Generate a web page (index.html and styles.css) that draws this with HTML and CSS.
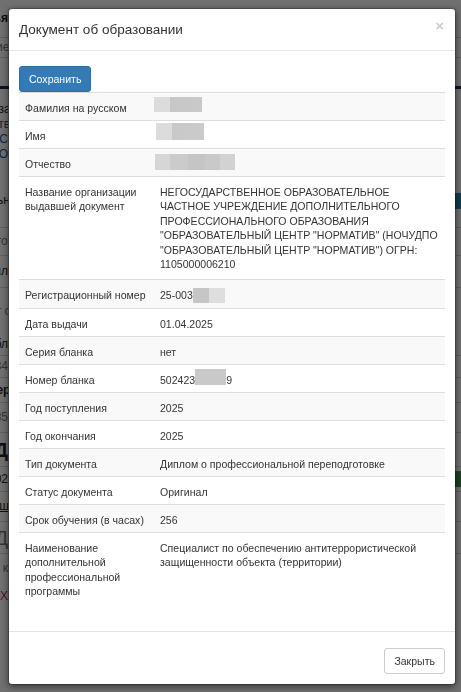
FILE: index.html
```html
<!DOCTYPE html>
<html lang="ru">
<head>
<meta charset="utf-8">
<title>Документ об образовании</title>
<link rel="stylesheet" href="styles.css">
</head>
<body>
<div class="page">
  <div class="pg-row pg-r1"><span class="frag frag-bold">Статья</span></div>
  <div class="pg-row pg-r2"><span class="frag frag-gray">Отделение</span></div>
  <div class="pg-row pg-r3"></div>
  <div class="pg-row pg-r4">
    <span class="frag">Учебное заведение</span>
    <span class="frag frag-blue">Государственное уд</span>
    <span class="frag frag-blue">ОСС</span>
    <span class="frag frag-blue">ЦЕНТРО</span>
  </div>
  <div class="pg-row pg-r5"><span class="frag">Специальностя</span><span class="tag tag-teal"></span></div>
  <div class="pg-row pg-r6"><span class="frag frag-gray">Документов</span></div>
  <div class="pg-row pg-r7"><span class="frag">Файл</span></div>
  <div class="pg-row pg-r8"><span class="frag frag-gray">Документ ок</span></div>
  <div class="pg-row pg-r9"><span class="frag">Бланк бл</span></div>
  <div class="pg-row pg-r10"><span class="frag frag-gray">Номер 34</span></div>
  <div class="pg-row pg-r11"><span class="frag frag-bold">Удостоверение ав</span></div>
  <div class="pg-row pg-r12"><span class="frag frag-gray">1235</span></div>
  <div class="pg-row pg-r13"><span class="frag frag-bold frag-big">Д</span></div>
  <div class="pg-row pg-r14"><span class="frag">202</span><span class="tag tag-green"></span></div>
  <div class="pg-row pg-r15"><span class="frag frag-under">Выписка ш</span></div>
  <div class="pg-row pg-r16"><span class="frag frag-big frag-gray">Д</span></div>
  <div class="pg-row pg-r17"><span class="frag frag-gray">Отдел к</span></div>
  <div class="pg-row pg-r18"><span class="frag frag-red">ЮХ</span></div>
  <div class="pg-toolbar">
    <span class="tb-btn"></span>
    <span class="tb-sep"></span>
    <span class="tb-gap"></span>
    <span class="tb-sep"></span>
  </div>
</div>

<div class="backdrop"></div>

<div class="modal" role="dialog">
  <div class="modal-content">
    <div class="modal-header">
      <h4 class="modal-title">Документ об образовании</h4>
      <button class="close" type="button" aria-label="Close">×</button>
    </div>
    <div class="modal-body">
      <button class="btn btn-primary" type="button">Сохранить</button>
      <table class="table table-striped">
        <colgroup><col class="col-label"><col></colgroup>
        <tbody>
          <tr><td class="lbl">Фамилия на русском</td><td><span class="blur blur-1"></span></td></tr>
          <tr><td class="lbl">Имя</td><td><span class="blur blur-2"></span></td></tr>
          <tr><td class="lbl">Отчество</td><td><span class="blur blur-3"></span></td></tr>
          <tr class="tall"><td class="lbl">Название организации выдавшей документ</td><td>НЕГОСУДАРСТВЕННОЕ ОБРАЗОВАТЕЛЬНОЕ ЧАСТНОЕ УЧРЕЖДЕНИЕ ДОПОЛНИТЕЛЬНОГО ПРОФЕССИОНАЛЬНОГО ОБРАЗОВАНИЯ "ОБРАЗОВАТЕЛЬНЫЙ ЦЕНТР "НОРМАТИВ" (НОЧУДПО "ОБРАЗОВАТЕЛЬНЫЙ ЦЕНТР "НОРМАТИВ") ОГРН: 1105000006210</td></tr>
          <tr><td class="lbl">Регистрационный номер</td><td>25-003<span class="blur blur-4"></span></td></tr>
          <tr><td class="lbl">Дата выдачи</td><td>01.04.2025</td></tr>
          <tr><td class="lbl">Серия бланка</td><td>нет</td></tr>
          <tr><td class="lbl">Номер бланка</td><td>502423<span class="blur blur-5"></span>9</td></tr>
          <tr><td class="lbl">Год поступления</td><td>2025</td></tr>
          <tr><td class="lbl">Год окончания</td><td>2025</td></tr>
          <tr><td class="lbl">Тип документа</td><td>Диплом о профессиональной переподготовке</td></tr>
          <tr><td class="lbl">Статус документа</td><td>Оригинал</td></tr>
          <tr><td class="lbl">Срок обучения (в часах)</td><td>256</td></tr>
          <tr><td class="lbl">Наименование дополнительной профессиональной программы</td><td>Специалист по обеспечению антитеррористической защищенности объекта (территории)</td></tr>
        </tbody>
      </table>
    </div>
    <div class="modal-footer">
      <button class="btn btn-default" type="button">Закрыть</button>
    </div>
  </div>
</div>
</body>
</html>
```

FILE: styles.css
```css
html, body {
  margin: 0;
  padding: 0;
  height: 100%;
}

body {
  font-family: "Liberation Sans", Arial, Helvetica, sans-serif;
  font-size: 10.55px;
  line-height: 14.5px;
  color: #333;
  background: #fff;
  overflow: hidden;
}

/* ---------- page behind the dialog ---------- */
.page {
  width: 461px;
}

.pg-row {
  display: flex;
  flex-direction: column;
  justify-content: center;
  border-bottom: 1px solid #d4d4d4;
  box-sizing: border-box;
  position: relative;
}

.frag {
  display: block;
  width: 60px;
  margin-left: -52px;
  text-align: right;
  white-space: nowrap;
  overflow: hidden;
  font-size: 12px;
  line-height: 15px;
  color: #222;
}
.frag-bold { font-weight: bold; }
.frag-gray { color: #777; }
.frag-blue { color: #1a4f9c; }
.frag-red { color: #a33; }
.frag-big { font-size: 20px; line-height: 24px; }
.frag-under { text-decoration: underline; }

.pg-r1 { height: 38px; }
.pg-r2 { height: 20px; }
.pg-r3 { height: 31px; border-bottom: 3px solid #1d2c4a; }
.pg-r4 { height: 85px; border-bottom: none; }
.pg-r5 { height: 54px; }
.pg-r6 { height: 28px; }
.pg-r7 { height: 32px; }
.pg-r8 { height: 46px; border-bottom: none; }
.pg-r9 { height: 22px; }
.pg-r10 { height: 22px; }
.pg-r11 { height: 25px; }
.pg-r12 { height: 30px; }
.pg-r13 { height: 34px; }
.pg-r14 { height: 25px; }
.pg-r15 { height: 30px; }
.pg-r16 { height: 32px; }
.pg-r17 { height: 28px; border-bottom: none; }
.pg-r18 { height: 28px; border-bottom: none; }

.tag {
  position: absolute;
  right: 0;
  width: 20px;
  height: 16px;
}
.tag-teal { background: #2b8aa4; }
.tag-green { background: #3c9a4c; }

.pg-toolbar {
  display: flex;
  height: 40px;
  padding-left: 173px;
}
.tb-btn {
  width: 48px;
  background: #1d2c4a;
}
.tb-sep {
  width: 1px;
  margin-left: 4px;
  background: #333;
}
.tb-gap {
  width: 60px;
}

.backdrop {
  position: fixed;
  top: 0;
  left: 0;
  right: 0;
  bottom: 0;
  background: rgba(0, 0, 0, 0.56);
}

/* ---------- modal ---------- */
.modal {
  position: fixed;
  top: 8px;
  left: 8px;
  width: 448px;
}

.modal-content {
  box-sizing: border-box;
  width: 448px;
  background: #fff;
  border: 1px solid rgba(0, 0, 0, 0.2);
  border-radius: 4px;
  box-shadow: 0 2px 7px rgba(0, 0, 0, 0.5);
  background-clip: padding-box;
}

.modal-header {
  display: flex;
  justify-content: space-between;
  align-items: flex-start;
  padding: 11px 10px 11px 10px;
  border-bottom: 1px solid #e5e5e5;
}

.modal-title {
  margin: 0;
  font-size: 13.55px;
  line-height: 19px;
  font-weight: normal;
  color: #333;
}

.close {
  padding: 0;
  margin: -2px 1px 0 0;
  border: 0;
  background: transparent;
  font-family: "Liberation Sans", Arial, sans-serif;
  font-size: 15px;
  line-height: 15px;
  font-weight: bold;
  color: #000;
  opacity: 0.2;
  cursor: pointer;
}

.modal-body {
  padding: 15px 10px 0 10px;
}

.btn {
  display: inline-block;
  box-sizing: border-box;
  height: 26px;
  padding: 5px 9px;
  font-family: "Liberation Sans", Arial, sans-serif;
  font-size: 10.55px;
  line-height: 14px;
  border: 1px solid transparent;
  border-radius: 3px;
  cursor: pointer;
}

.btn-primary {
  color: #fff;
  background: #337ab7;
  border-color: #2e6da4;
}

.btn-default {
  color: #333;
  background: #fff;
  border-color: #ccc;
}

.modal-body .btn-primary {
  display: block;
}

.table {
  width: 100%;
  table-layout: fixed;
  border-collapse: collapse;
  border-spacing: 0;
  margin-bottom: 27px;
}

.col-label {
  width: 135px;
}

.table td {
  padding: 7.5px 6px 5px 6px;
  vertical-align: top;
  border-top: 1px solid #ddd;
  line-height: 14.5px;
}

.table td.lbl {
  padding-right: 2px;
}

.table-striped tbody tr:nth-child(odd) {
  background: #f9f9f9;
}

.table tr.tall td {
  padding-bottom: 7.5px;
}

/* blurred personal data */
.blur {
  display: inline-block;
  vertical-align: top;
}

.blur-1 {
  width: 48px;
  height: 15.5px;
  margin: -4px 0 0 -6px;
  background: linear-gradient(to right, #dcdcdc 0, #dcdcdc 16px, #c7c7c7 16px, #c9c9c9 100%);
}

.blur-2 {
  width: 48px;
  height: 17px;
  margin: -5.5px 0 0 -4px;
  background: linear-gradient(to right, #dcdcdc 0, #dcdcdc 16px, #c8c8c8 16px, #cbcbcb 100%);
}

.blur-3 {
  width: 80px;
  height: 16px;
  margin: -2.5px 0 0 -5px;
  background: linear-gradient(to right, #d6d6d6 0, #d6d6d6 15px, #cbcbcb 15px, #cbcbcb 33px, #c5c5c5 33px, #c5c5c5 50px, #c9c9c9 50px, #c9c9c9 65px, #d2d2d2 65px);
}

.blur-4 {
  width: 32px;
  height: 15.5px;
  margin: 0;
  background: linear-gradient(to right, #c6c6c6 0, #c6c6c6 16px, #dedede 16px);
}

.blur-5 {
  width: 31px;
  height: 16px;
  margin: -3.5px 0 0 0;
  background: #c9c9c9;
}

.modal-footer {
  padding: 16px 10px 10px 10px;
  text-align: right;
  border-top: 1px solid #e5e5e5;
}
```
